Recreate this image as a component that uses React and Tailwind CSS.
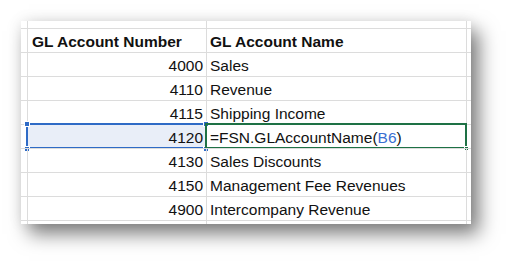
import React from 'react';

const rows = [
  { num: '4000', name: 'Sales' },
  { num: '4110', name: 'Revenue' },
  { num: '4115', name: 'Shipping Income' },
  { num: '4120', name: null, active: true },
  { num: '4130', name: 'Sales Discounts' },
  { num: '4150', name: 'Management Fee Revenues' },
  { num: '4900', name: 'Intercompany Revenue' },
];

const line = 'border-[#dcdcdc]';

function Row({ children, h = 'h-[24px]', className = '' }) {
  return (
    <div className={`relative flex ${h} border-t ${line} ${className}`}>
      {children}
    </div>
  );
}

function Handle({ className }) {
  return <div className={`absolute w-[6px] h-[6px] border border-white ${className}`} />;
}

export default function App() {
  return (
    <div
      className="w-[513px] h-[267px] bg-white pl-[21px] pt-[21px]"
      style={{ fontFamily: '"Liberation Sans", Arial, sans-serif' }}
    >
      <div className="w-[450px] h-[203px] bg-white shadow-[8px_10px_18px_rgba(0,0,0,0.5),0_0_14px_rgba(0,0,0,0.08)] flex flex-col text-[15.5px] text-[#111]">
        {/* partial row above the header */}
        <div className="flex h-[7px]">
          <div className="w-[6px]" />
          <div className={`w-[179px] border-l ${line}`} />
          <div className={`w-[260px] border-l ${line}`} />
          <div className={`w-[5px] border-l ${line}`} />
        </div>

        <Row>
          <div className="w-[6px]" />
          <div className={`w-[179px] border-l ${line} pl-[4px] pt-[2px] flex items-center font-bold`}>GL Account Number</div>
          <div className={`w-[260px] border-l ${line} pl-[3px] pt-[2px] flex items-center font-bold`}>GL Account Name</div>
          <div className={`w-[5px] border-l ${line}`} />
        </Row>

        {rows.map((r) => (
          <Row key={r.num}>
            <div className="w-[6px]" />
            <div
              className={`w-[179px] border-l ${line} pr-[3px] pt-[2px] flex items-center justify-end ${
                r.active ? 'bg-[#e9eef8]' : ''
              }`}
            >
              {r.num}
            </div>
            <div className={`w-[260px] border-l ${line} pl-[3px] pt-[2px] flex items-center`}>
              {r.active ? (
                <span>
                  =FSN.GLAccountName(<span className="text-[#3b6fd1]">B6</span>)
                </span>
              ) : (
                r.name
              )}
            </div>
            <div className={`w-[5px] border-l ${line}`} />

            {r.active && (
              <>
                {/* referenced cell outline */}
                <div className="absolute left-[5px] top-[-2px] w-[180px] h-[26px] border-2 border-[#2f6bc6] border-r-0 pointer-events-none" />
                <Handle className="left-[3px] top-[-4px] bg-[#2f6bc6]" />
                <Handle className="left-[3px] top-[21px] bg-[#2f6bc6]" />
                <Handle className="left-[182px] top-[-4px] bg-[#2f6bc6]" />
                <Handle className="left-[182px] top-[21px] bg-[#2f6bc6]" />
                {/* active cell outline */}
                <div className="absolute left-[184px] top-[-2px] w-[262px] h-[26px] border-2 border-[#1e7145] pointer-events-none" />
                <div className="absolute left-[443px] top-[21px] w-[5px] h-[5px] bg-[#1e7145] border border-white" />
              </>
            )}
          </Row>
        ))}

        {/* partial row below */}
        <div className={`flex h-[4px] border-t ${line}`}>
          <div className="w-[6px]" />
          <div className={`w-[179px] border-l ${line}`} />
          <div className={`w-[260px] border-l ${line}`} />
          <div className={`w-[5px] border-l ${line}`} />
        </div>
      </div>
    </div>
  );
}
